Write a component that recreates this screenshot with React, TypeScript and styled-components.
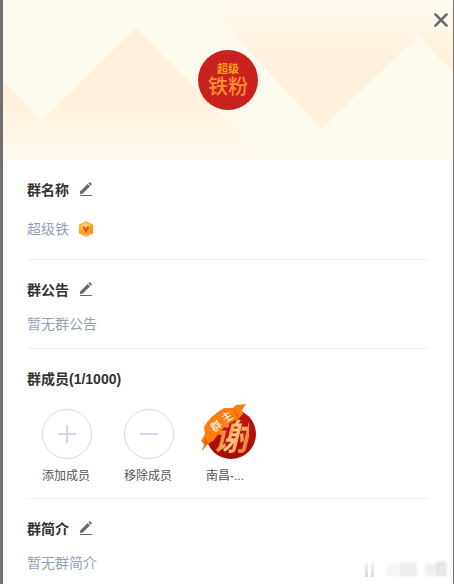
import React from "react";
import styled, { createGlobalStyle } from "styled-components";

const GlobalStyle = createGlobalStyle`
  * { box-sizing: border-box; }
  body {
    margin: 0;
    background: #717171;
    font-family: "Liberation Sans", "Noto Sans CJK SC", sans-serif;
    font-size: 14px;
    line-height: 20px;
    color: #333;
  }
  button { padding: 0; border: 0; background: none; font: inherit; color: inherit; cursor: pointer; }
  h2, p, ul { margin: 0; padding: 0; }
  svg { display: block; }
`;

const Panel = styled.main`
  position: relative;
  min-height: 100vh;
  margin: 0 1px 0 3px;
  background: #fff;
`;

const Banner = styled.header`
  position: relative;
  display: flex;
  align-items: center;
  justify-content: center;
  height: 160px;
  background: #fffaee;
`;

const BannerArt = styled.svg`
  position: absolute;
  inset: 0;
  width: 100%;
  height: 100%;
`;

const CloseButton = styled.button`
  position: absolute;
  top: 12px;
  right: 4px;
`;

const GroupAvatar = styled.div`
  position: relative;
  display: flex;
  flex-direction: column;
  align-items: center;
  justify-content: center;
  width: 60px;
  height: 60px;
  padding-bottom: 4px;
  border-radius: 50%;
  background: #c9211e;
  font-family: "Noto Sans CJK SC", sans-serif;
`;

const AvatarSmall = styled.span`
  font-size: 11px;
  font-weight: 700;
  line-height: 16px;
  color: #fda21d;
`;

const AvatarLarge = styled.span`
  font-size: 20px;
  font-weight: 500;
  line-height: 20px;
  color: #fb8e35;
`;

const Section = styled.section<{ $space: number; $end: number }>`
  display: flex;
  flex-direction: column;
  gap: ${(p) => p.$space}px;
  margin: 0 25px 0 24px;
  padding: 20px 0 ${(p) => p.$end}px;
  border-bottom: 1px solid #f0f0f2;
  &:last-of-type { border-bottom: 0; }
`;

const TitleRow = styled.div`
  display: flex;
  align-items: center;
  gap: 10px;
`;

const Title = styled.h2`
  font-size: 14px;
  font-weight: 700;
  line-height: 20px;
`;

const Value = styled.p`
  display: flex;
  align-items: center;
  gap: 9px;
  color: #939fba;
`;

const Members = styled.ul`
  display: flex;
  gap: 32px;
  padding-left: 15px;
  list-style: none;
`;

const Member = styled.li`
  width: 50px;
`;

const MemberButton = styled.button`
  display: flex;
  flex-direction: column;
  gap: 7px;
  width: 100%;
  text-align: left;
`;

const MemberName = styled.span`
  font-size: 12px;
  line-height: 20px;
  color: #555;
  white-space: nowrap;
`;

const Circle = styled.span`
  display: flex;
  align-items: center;
  justify-content: center;
  width: 50px;
  height: 50px;
  border: 1px solid #d3d8e4;
  border-radius: 50%;
`;

const Portrait = styled.span`
  position: relative;
  display: flex;
  align-items: center;
  justify-content: center;
  width: 50px;
  height: 50px;
  border-radius: 50%;
  background: radial-gradient(circle at 60% 30%, #c21d12, #a30c0a 75%);
`;

const PortraitText = styled.span`
  position: relative;
  font: italic 700 36px/50px "Noto Sans CJK SC", sans-serif;
  background: linear-gradient(115deg, #f4722a 15%, #f88d42 40%, #ffcb80 55%, #f58038 85%);
  background-clip: text;
  color: transparent;
`;

const OwnerRibbon = styled.svg`
  position: absolute;
  top: -7px;
  left: -6px;
`;

const Watermark = styled.svg`
  position: absolute;
  right: 3px;
  bottom: 4px;
  pointer-events: none;
`;

function EditButton({ label }: { label: string }) {
  return (
    <button type="button" aria-label={label}>
      <svg width="14" height="16" viewBox="0 0 14 16" fill="#686a73">
        <path d="M.8 12.2 L1.4 9.2 L8.6 1.9 L11.1 4.3 L3.9 11.5 Z" />
        <path d="M9.3 1.3 L10.2 .6 Q10.9 .1 11.6 .7 L12.5 1.6 Q13.1 2.2 12.5 2.9 L11.7 3.7 Z" />
        <rect x="1" y="13" width="12" height="1" />
      </svg>
    </button>
  );
}

function VipBadge() {
  return (
    <svg width="16" height="16" viewBox="0 0 16 16" aria-hidden="true">
      <defs>
        <linearGradient id="vip" x1="0" y1="0" x2="1" y2="1">
          <stop offset="0" stopColor="#ffbd42" />
          <stop offset="1" stopColor="#f88a22" />
        </linearGradient>
      </defs>
      <path d="M8 .7 L14.5 4 V12 L8 15.3 L1.5 12 V4 Z" fill="url(#vip)" stroke="url(#vip)" strokeWidth="1.2" strokeLinejoin="round" />
      <path d="M8 1.6 L13.5 4.5 L8 7 L2.5 4.5 Z" fill="#ffe06a" opacity=".75" />
      <path d="M2 12 L8 13.8 L14 12 L8 15 Z" fill="#ffd36a" opacity=".8" />
      <path d="M5.6 5.5 L8 10 L10.4 5.5" fill="none" stroke="#df4b10" strokeWidth="1.8" />
    </svg>
  );
}

function SignIcon({ plus }: { plus?: boolean }) {
  return (
    <svg width="18" height="18" viewBox="0 0 18 18" stroke="#d0d7e8" strokeWidth="2">
      <path d={plus ? "M0 9 H18 M9 0 V18" : "M0 9 H18"} />
    </svg>
  );
}

export default function App() {
  return (
    <>
      <GlobalStyle />
      <Panel>
        <Banner>
          <BannerArt viewBox="0 0 450 160" preserveAspectRatio="none" aria-hidden="true">
            <defs>
              <linearGradient id="rise" gradientUnits="userSpaceOnUse" x1="0" y1="28" x2="0" y2="152">
                <stop offset="0" stopColor="#fff1dc" />
                <stop offset=".6" stopColor="#fff1dc" />
                <stop offset="1" stopColor="#fff1dc" stopOpacity="0" />
              </linearGradient>
              <linearGradient id="fall" gradientUnits="userSpaceOnUse" x1="0" y1="8" x2="0" y2="129">
                <stop offset="0" stopColor="#fff1dc" stopOpacity="0" />
                <stop offset=".38" stopColor="#fff1dc" />
                <stop offset="1" stopColor="#fff1dc" />
              </linearGradient>
            </defs>
            <path d="M0 80 L38 121 L133 28 L256 152 H0 Z" fill="url(#rise)" />
            <path d="M206 8 L319 129 L415 35 L450 72 V8 Z" fill="url(#fall)" />
          </BannerArt>
          <GroupAvatar>
            <AvatarSmall>超级</AvatarSmall>
            <AvatarLarge>铁粉</AvatarLarge>
          </GroupAvatar>
          <CloseButton type="button" aria-label="关闭">
            <svg width="16" height="16" viewBox="0 0 16 16" stroke="#666970" strokeWidth="2.6" strokeLinecap="round">
              <path d="M2.4 2.4 L13.6 13.6 M13.6 2.4 L2.4 13.6" />
            </svg>
          </CloseButton>
        </Banner>

        <Section $space={19} $end={20}>
          <TitleRow>
            <Title>群名称</Title>
            <EditButton label="编辑群名称" />
          </TitleRow>
          <Value>
            超级铁
            <VipBadge />
          </Value>
        </Section>

        <Section $space={14} $end={14}>
          <TitleRow>
            <Title>群公告</Title>
            <EditButton label="编辑群公告" />
          </TitleRow>
          <Value>暂无群公告</Value>
        </Section>

        <Section $space={20} $end={12}>
          <Title>群成员(1/1000)</Title>
          <Members>
            <Member>
              <MemberButton type="button">
                <Circle><SignIcon plus /></Circle>
                <MemberName>添加成员</MemberName>
              </MemberButton>
            </Member>
            <Member>
              <MemberButton type="button">
                <Circle><SignIcon /></Circle>
                <MemberName>移除成员</MemberName>
              </MemberButton>
            </Member>
            <Member>
              <MemberButton type="button">
                <Portrait>
                  <OwnerRibbon width="50" height="50" viewBox="0 0 50 50">
                    <path d="M2 49 L4 42 L1 39 L5 32 L4 25 Q10 14 24 6 L33 6 L36 3 L46 2 L42 8 L43 12 L38 17 Q24 22 14 38 L8 42 Z" fill="#fb7f0c" />
                    <path d="M4 42 L5 34 L8 42 Z M33 6 L38 13 L38 17 Z" fill="#e06400" />
                    <text x="16" y="28" transform="rotate(-38 16 24)" textAnchor="middle" fontSize="11" fill="#fff" fontFamily="Noto Sans CJK SC, sans-serif">群</text>
                    <text x="27" y="19" transform="rotate(-32 27 15)" textAnchor="middle" fontSize="11" fill="#fff" fontFamily="Noto Sans CJK SC, sans-serif">主</text>
                  </OwnerRibbon>
                  <PortraitText>谢</PortraitText>
                </Portrait>
                <MemberName>南昌-...</MemberName>
              </MemberButton>
            </Member>
          </Members>
        </Section>

        <Section $space={14} $end={10}>
          <TitleRow>
            <Title>群简介</Title>
            <EditButton label="编辑群简介" />
          </TitleRow>
          <Value>暂无群简介</Value>
        </Section>

        <Watermark width="88" height="22" viewBox="0 0 88 22" aria-hidden="true">
          <defs>
            <filter id="soft"><feGaussianBlur stdDeviation="1.6" /></filter>
            <linearGradient id="bar" x1="0" y1="0" x2="0" y2="1">
              <stop offset="0" stopColor="#f6f6f6" />
              <stop offset="1" stopColor="#d8d8d8" />
            </linearGradient>
          </defs>
          <path d="M3 4 H6 V19 H3 Z M9 4 H12 V19 H9 Z" fill="url(#bar)" />
          <g filter="url(#soft)" fill="#efefef">
            <rect x="24" y="5" width="12" height="13" opacity=".6" />
            <rect x="37" y="4" width="18" height="15" />
            <rect x="63" y="6" width="10" height="12" />
            <path d="M74 4 H84 V18 H74 Z M77 8 V10 H82 V8 Z M77 13 V15 H82 V13 Z" fill="#dedede" fillRule="evenodd" />
          </g>
        </Watermark>
      </Panel>
    </>
  );
}
